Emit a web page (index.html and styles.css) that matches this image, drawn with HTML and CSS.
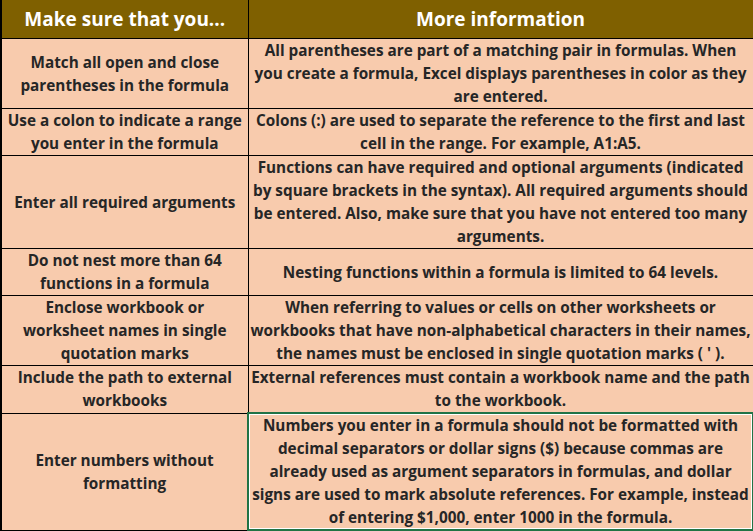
FILE: index.html
```html
<!DOCTYPE html>
<html>
<head>
<meta charset="utf-8">
<link rel="stylesheet" href="styles.css">
</head>
<body>
<table class="tbl">
  <colgroup><col class="c1"><col class="c2"></colgroup>
  <thead>
    <tr class="head"><th>Make sure that you...</th><th>More information</th></tr>
  </thead>
  <tbody>
    <tr class="r3"><td>Match all open and close<br>parentheses in the formula</td><td>All parentheses are part of a matching pair in formulas. When<br>you create a formula, Excel displays parentheses in color as they<br>are entered.</td></tr>
    <tr class="r2"><td>Use a colon to indicate a range<br>you enter in the formula</td><td>Colons (:) are used to separate the reference to the first and last<br>cell in the range. For example, A1:A5.</td></tr>
    <tr class="r4"><td>Enter all required arguments</td><td>Functions can have required and optional arguments (indicated<br>by square brackets in the syntax). All required arguments should<br>be entered. Also, make sure that you have not entered too many<br>arguments.</td></tr>
    <tr class="r2"><td>Do not nest more than 64<br>functions in a formula</td><td>Nesting functions within a formula is limited to 64 levels.</td></tr>
    <tr class="r3"><td>Enclose workbook or<br>worksheet names in single<br>quotation marks</td><td>When referring to values or cells on other worksheets or<br>workbooks that have non-alphabetical characters in their names,<br>the names must be enclosed in single quotation marks ( ' ).</td></tr>
    <tr class="r2"><td>Include the path to external<br>workbooks</td><td>External references must contain a workbook name and the path<br>to the workbook.</td></tr>
    <tr class="r5"><td>Enter numbers without<br>formatting</td><td class="sel">Numbers you enter in a formula should not be formatted with<br>decimal separators or dollar signs ($) because commas are<br>already used as argument separators in formulas, and dollar<br>signs are used to mark absolute references. For example, instead<br>of entering $1,000, enter 1000 in the formula.</td></tr>
  </tbody>
</table>
</body>
</html>
```
FILE: styles.css
```css
html, body {
  margin: 0;
  padding: 0;
  background: #ffffff;
}
.tbl {
  border-collapse: collapse;
  table-layout: fixed;
  width: 752px;
  font-family: "Open Sans", Lato, sans-serif;
  font-weight: 700;
  border-left: 2px solid #000;
}
.c1 { width: 247px; }
.c2 { width: 505px; }
.tbl th, .tbl td {
  border: 1px solid #000;
  padding: 0;
  text-align: center;
  vertical-align: middle;
  white-space: nowrap;
  overflow: hidden;
}
.head th {
  height: 38px;
  background: #7f6000;
  color: #ffffff;
  font-size: 19px;
  border-top: none;
}
.tbl td {
  background: #f8cbad;
  color: #262626;
  font-size: 15.3px;
  line-height: 23px;
}
.r2 td { height: 46px; }
.r3 td { height: 69px; }
.r4 td { height: 92px; }
.r5 td { height: 115px; }
.tbl td.sel {
  border: 2px solid #217346;
  box-shadow: inset 0 0 0 1px #ffffff;
}
```
